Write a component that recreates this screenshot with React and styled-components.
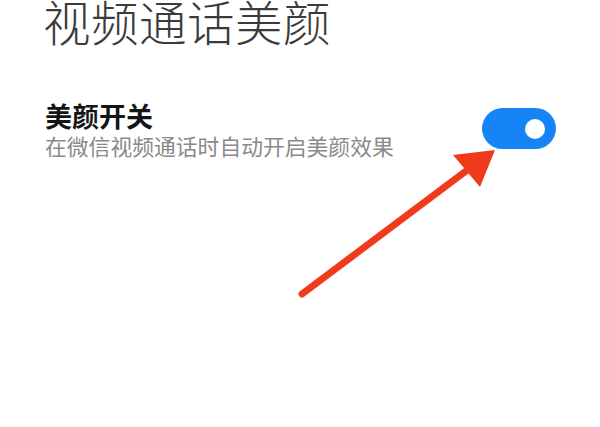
import React, { useState } from "react";
import styled, { createGlobalStyle } from "styled-components";

const GlobalStyle = createGlobalStyle`
  html, body {
    margin: 0;
    padding: 0;
    background: #ffffff;
  }
  body {
    font-family: "Noto Sans CJK SC", "Noto Sans", sans-serif;
  }
`;

const Page = styled.div`
  position: relative;
  width: 600px;
  height: 427px;
  overflow: hidden;
  background: #ffffff;
`;

const Title = styled.h1`
  margin: -3px 0 0 0;
  padding: 0 0 0 43px;
  font-size: 47.5px;
  font-weight: 300;
  line-height: 48px;
  color: #3b3b3b;
  letter-spacing: 0.5px;
`;

const SettingRow = styled.div`
  display: flex;
  align-items: flex-start;
  justify-content: space-between;
  padding: 57px 44px 0 45px;
`;

const TextBlock = styled.div`
  display: flex;
  flex-direction: column;
  gap: 3px;
`;

const Label = styled.div`
  font-size: 27px;
  font-weight: 700;
  line-height: 28px;
  color: #151515;
`;

const Hint = styled.div`
  font-size: 21.8px;
  font-weight: 400;
  line-height: 26px;
  color: #8a8a8a;
`;

const Switch = styled.button`
  position: relative;
  width: 74px;
  height: 41px;
  margin-top: 6px;
  border: none;
  padding: 0;
  border-radius: 21px;
  background: ${(p) => (p.$on ? "#1684f6" : "#d9d9d9")};
  cursor: pointer;
`;

const Knob = styled.span`
  position: absolute;
  top: 50%;
  left: ${(p) => (p.$on ? "43px" : "11px")};
  width: 20px;
  height: 20px;
  margin-top: -10px;
  border-radius: 50%;
  background: #ffffff;
`;

const ArrowLayer = styled.svg`
  position: absolute;
  left: 0;
  top: 0;
  pointer-events: none;
`;

const Arrow = () => (
  <ArrowLayer width="600" height="427" viewBox="0 0 600 427">
    <line
      x1="302"
      y1="294"
      x2="470"
      y2="168"
      stroke="#ef3a1e"
      strokeWidth="7"
      strokeLinecap="round"
    />
    <polygon points="495,150 453,155 480,187" fill="#ef3a1e" />
  </ArrowLayer>
);

const App = () => {
  const [on, setOn] = useState(true);

  return (
    <Page>
      <GlobalStyle />
      <Title>视频通话美颜</Title>
      <SettingRow>
        <TextBlock>
          <Label>美颜开关</Label>
          <Hint>在微信视频通话时自动开启美颜效果</Hint>
        </TextBlock>
        <Switch $on={on} onClick={() => setOn(!on)}>
          <Knob $on={on} />
        </Switch>
      </SettingRow>
      <Arrow />
    </Page>
  );
};

export default App;
